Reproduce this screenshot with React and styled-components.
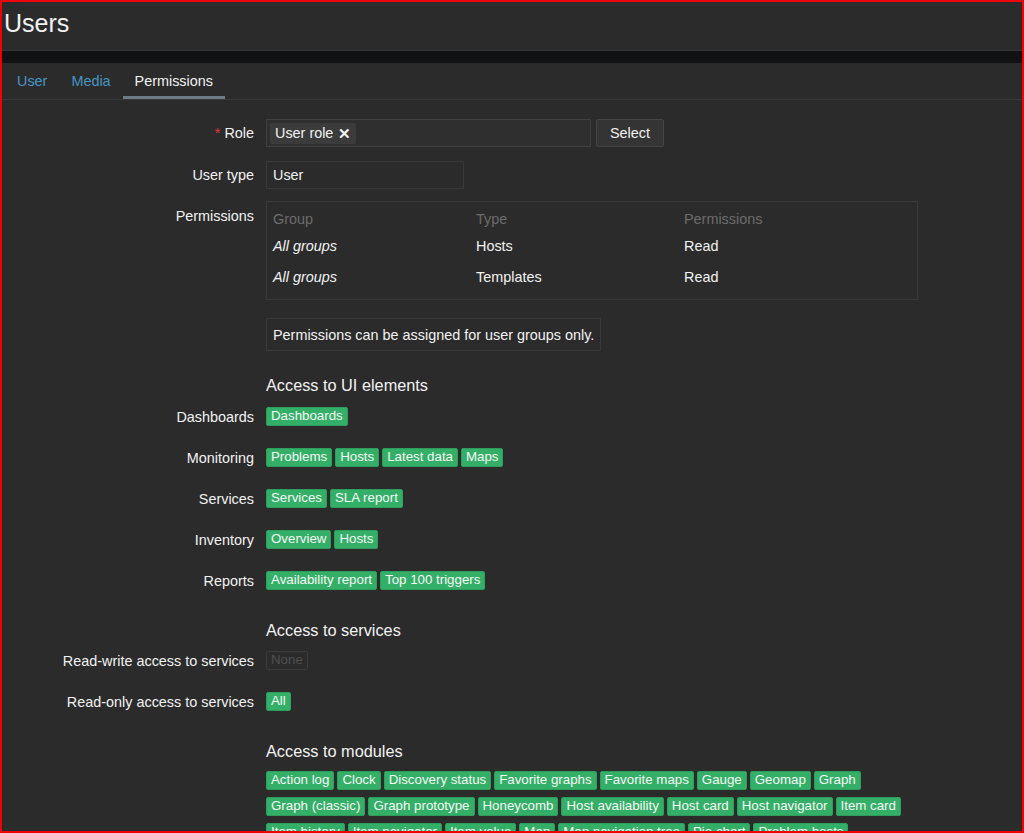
import React from 'react';
import styled, { createGlobalStyle } from 'styled-components';

const GlobalStyle = createGlobalStyle`
  html, body {
    margin: 0;
    padding: 0;
    background: #2b2b2b;
  }
  body {
    font-family: "Liberation Sans", Arial, sans-serif;
    font-size: 14.4px;
    color: #f2f2f2;
  }
`;

const Frame = styled.div`
  box-sizing: border-box;
  width: 1024px;
  height: 833px;
  border: 2px solid #f00000;
  background: #2b2b2b;
  overflow: hidden;
`;

const Header = styled.header`
  height: 49px;
  padding: 7px 2px 0;
  box-sizing: border-box;
  border-bottom: 1px solid #333436;
`;

const Title = styled.h1`
  margin: 0;
  font-size: 25px;
  line-height: 28px;
  font-weight: normal;
  color: #f2f2f2;
`;

const Band = styled.div`
  height: 12px;
  background: #111214;
`;

const TabBar = styled.nav`
  display: flex;
  height: 37px;
  padding-left: 3px;
  box-sizing: border-box;
  border-bottom: 1px solid #383838;
`;

const Tab = styled.a`
  display: flex;
  align-items: center;
  padding: 3px 12px 0;
  box-sizing: border-box;
  color: ${p => (p.$active ? '#f2f2f2' : '#4796c4')};
  border-bottom: 3px solid ${p => (p.$active ? '#6b7c87' : 'transparent')};
  cursor: pointer;
`;

const Form = styled.div`
  padding-top: 19px;
`;

const Row = styled.div`
  display: grid;
  grid-template-columns: 252px 1fr;
  column-gap: 12px;
  align-items: ${p => (p.$top ? 'start' : 'center')};
  margin-top: ${p => p.$gap || 0}px;
`;

const Label = styled.label`
  text-align: right;
  line-height: 18px;
  padding-top: ${p => p.$pt || 0}px;
`;

const Asterisk = styled.span`
  color: #e33734;
  margin-right: 4px;
`;

const Cell = styled.div`
  display: flex;
  align-items: center;
  gap: 5px;
  min-width: 0;
`;

const MultiSelect = styled.div`
  box-sizing: border-box;
  width: 325px;
  height: 28px;
  padding: 3px;
  background: #2f2f2f;
  border: 1px solid #404040;
  display: flex;
  align-items: flex-start;
`;

const Chip = styled.span`
  display: inline-flex;
  align-items: center;
  gap: 5px;
  height: 21px;
  padding: 0 5px;
  background: #3b3b3b;
  border-radius: 2px;
  line-height: 21px;
`;

const Remove = styled.span`
  font-size: 15px;
  font-weight: bold;
`;

const Button = styled.button`
  box-sizing: border-box;
  height: 28px;
  width: 68px;
  background: #343434;
  border: 1px solid #454545;
  border-radius: 2px;
  color: #f2f2f2;
  font: inherit;
`;

const ReadonlyBox = styled.div`
  box-sizing: border-box;
  width: 198px;
  height: 28px;
  padding: 0 6px;
  line-height: 26px;
  border: 1px solid #383838;
`;

const PermTable = styled.div`
  box-sizing: border-box;
  width: 652px;
  height: 99px;
  padding: 6px 6px 0;
  border: 1px solid #383838;
  display: grid;
  grid-template-columns: 203px 208px 1fr;
  grid-template-rows: 22px 31px 31px;
  align-items: center;
`;

const Th = styled.div`
  color: #6c6c6c;
`;

const Td = styled.div`
  font-style: ${p => (p.$italic ? 'italic' : 'normal')};
`;

const InfoBox = styled.div`
  box-sizing: border-box;
  height: 33px;
  padding: 0 6px;
  border: 1px solid #383838;
  display: inline-flex;
  align-items: center;
  justify-self: start;
`;

const Heading = styled.h3`
  margin: 0;
  font-size: 16.3px;
  line-height: 20px;
  font-weight: normal;
`;

const Tags = styled.div`
  display: flex;
  flex-wrap: wrap;
  gap: 7px 3px;
  max-width: ${p => p.$max || 'none'};
`;

const Tag = styled.span`
  box-sizing: border-box;
  height: 19px;
  padding: 0 4px;
  font-size: 13.3px;
  line-height: 16px;
  border-radius: 2px;
  white-space: nowrap;
  color: ${p => (p.$off ? '#4f4f4f' : '#f7f7f7')};
  background: ${p => (p.$off ? 'transparent' : '#34af67')};
  border: 1px solid ${p => (p.$off ? '#3a3a3a' : '#2e9d5c')};
`;

const uiElements = [
  ['Dashboards', ['Dashboards']],
  ['Monitoring', ['Problems', 'Hosts', 'Latest data', 'Maps']],
  ['Services', ['Services', 'SLA report']],
  ['Inventory', ['Overview', 'Hosts']],
  ['Reports', ['Availability report', 'Top 100 triggers']],
];

const modules = [
  'Action log', 'Clock', 'Discovery status', 'Favorite graphs', 'Favorite maps',
  'Gauge', 'Geomap', 'Graph', 'Graph (classic)', 'Graph prototype', 'Honeycomb',
  'Host availability', 'Host card', 'Host navigator', 'Item card', 'Item history',
  'Item navigator', 'Item value', 'Map', 'Map navigation tree', 'Pie chart',
  'Problem hosts', 'Problems by severity', 'Problems', 'SLA report',
  'System information', 'Top hosts', 'Top triggers', 'Trigger overview', 'URL',
  'Web monitoring',
];

const permissions = [
  ['All groups', 'Hosts', 'Read'],
  ['All groups', 'Templates', 'Read'],
];

const App = () => (
  <>
    <GlobalStyle />
    <Frame>
      <Header>
        <Title>Users</Title>
      </Header>
      <Band />
      <TabBar>
        <Tab>User</Tab>
        <Tab>Media</Tab>
        <Tab $active>Permissions</Tab>
      </TabBar>

      <Form>
        <Row>
          <Label>
            <Asterisk>*</Asterisk>Role
          </Label>
          <Cell>
            <MultiSelect>
              <Chip>
                User role <Remove>✕</Remove>
              </Chip>
            </MultiSelect>
            <Button>Select</Button>
          </Cell>
        </Row>

        <Row $gap={14}>
          <Label>User type</Label>
          <ReadonlyBox>User</ReadonlyBox>
        </Row>

        <Row $gap={12} $top>
          <Label $pt={6}>Permissions</Label>
          <PermTable>
            <Th>Group</Th>
            <Th>Type</Th>
            <Th>Permissions</Th>
            {permissions.map(([group, type, perm], i) => (
              <React.Fragment key={i}>
                <Td $italic>{group}</Td>
                <Td>{type}</Td>
                <Td>{perm}</Td>
              </React.Fragment>
            ))}
          </PermTable>
        </Row>

        <Row $gap={18}>
          <span />
          <InfoBox>Permissions can be assigned for user groups only.</InfoBox>
        </Row>

        <Row $gap={24}>
          <span />
          <Heading>Access to UI elements</Heading>
        </Row>

        {uiElements.map(([label, items], i) => (
          <Row key={label} $gap={i === 0 ? 12 : 22}>
            <Label>{label}</Label>
            <Tags>
              {items.map(item => (
                <Tag key={item}>{item}</Tag>
              ))}
            </Tags>
          </Row>
        ))}

        <Row $gap={30}>
          <span />
          <Heading>Access to services</Heading>
        </Row>
        <Row $gap={11}>
          <Label>Read-write access to services</Label>
          <Tags>
            <Tag $off>None</Tag>
          </Tags>
        </Row>
        <Row $gap={22}>
          <Label>Read-only access to services</Label>
          <Tags>
            <Tag>All</Tag>
          </Tags>
        </Row>

        <Row $gap={30}>
          <span />
          <Heading>Access to modules</Heading>
        </Row>
        <Row $gap={10}>
          <span />
          <Tags $max="640px">
            {modules.map(m => (
              <Tag key={m}>{m}</Tag>
            ))}
          </Tags>
        </Row>
      </Form>
    </Frame>
  </>
);

export default App;
